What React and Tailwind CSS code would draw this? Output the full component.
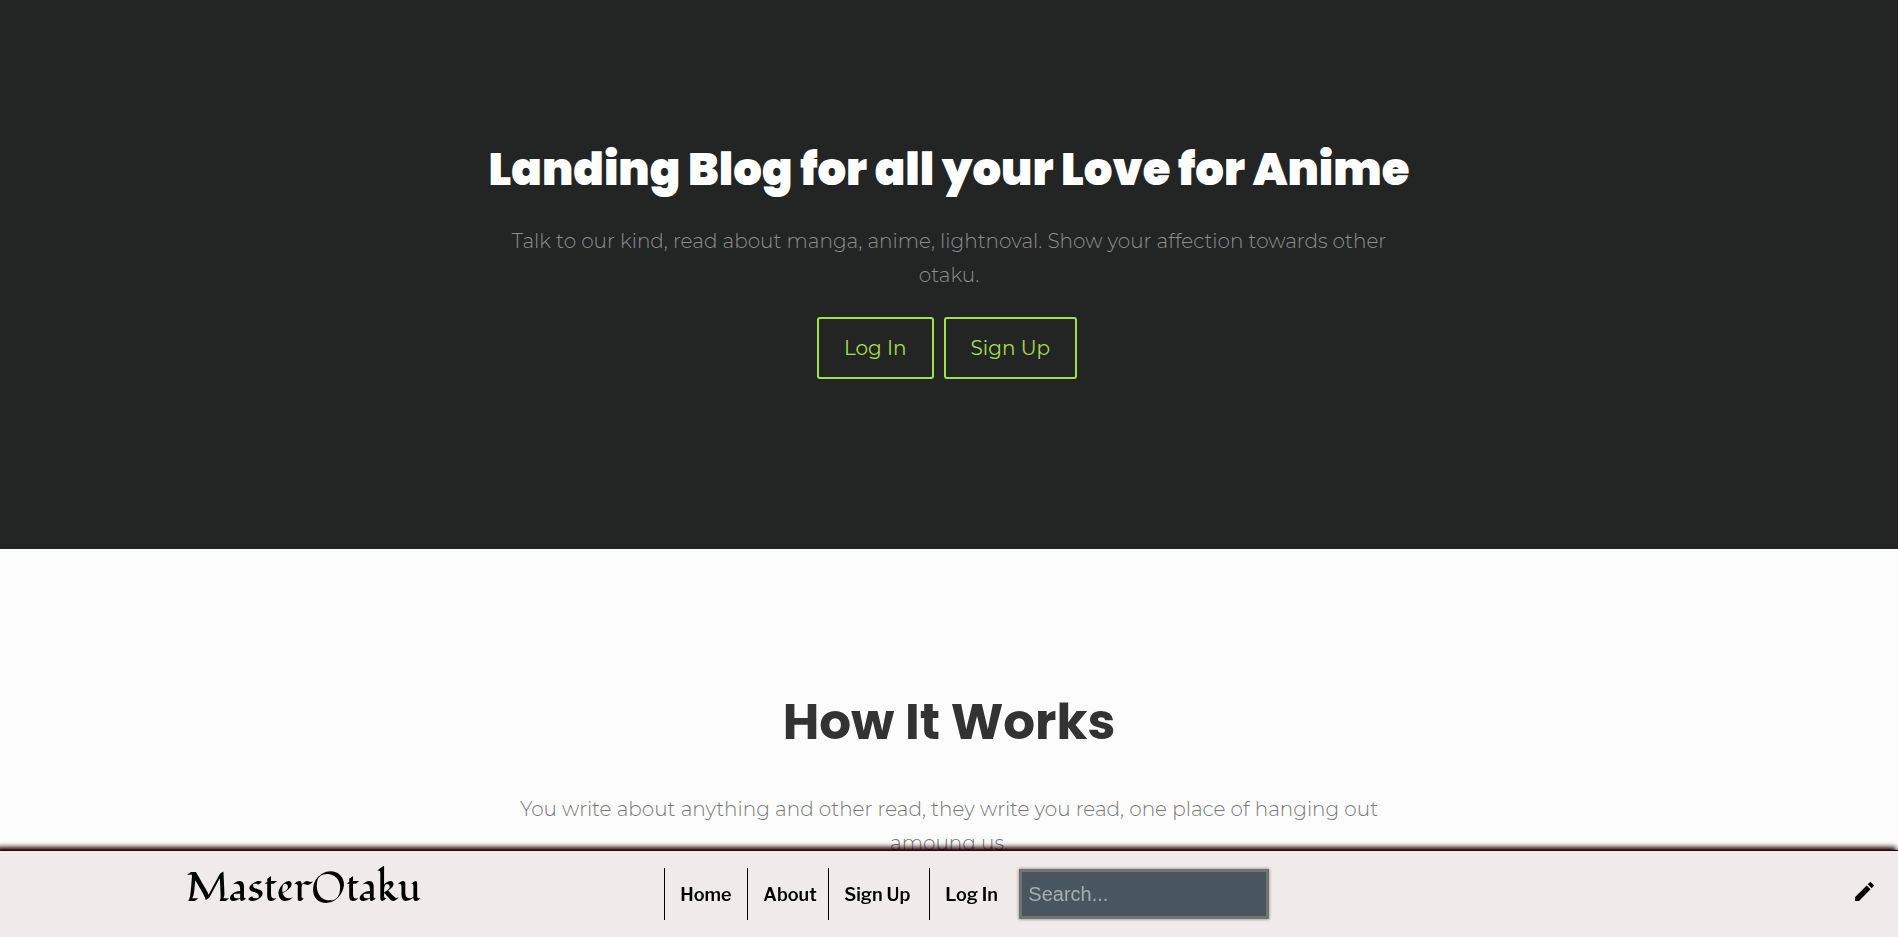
import { MdEdit } from "react-icons/md";

const links = [
  { label: "Home", href: "#home", width: "w-[83px]" },
  { label: "About", href: "#about", width: "w-[81px]" },
  { label: "Sign Up", href: "#signup", width: "w-[101px]" },
  { label: "Log In", href: "#login", width: "w-[90px]" },
];

function HeroButton({ children }) {
  return (
    <button
      type="button"
      className="h-[62px] cursor-pointer rounded-[3px] border-2 border-[#a3de4b] px-[25px] text-[20px] text-[#a3de4b]"
    >
      {children}
    </button>
  );
}

function Hero() {
  return (
    <header className="flex h-[549px] flex-col items-center bg-[#232525] px-4 pt-[136px] text-center">
      <h1 className="font-[Poppins,Inter,sans-serif] text-[45px] leading-[68px] font-black text-white">
        Landing Blog for all your Love for Anime
      </h1>
      <p className="mt-5 max-w-[900px] text-[20px] leading-[34px] font-light text-[#8f8f8f]">
        Talk to our kind, read about manga, anime, lightnoval. Show your affection towards other otaku.
      </p>
      <div className="mt-[25px] mr-1 flex gap-2.5">
        <HeroButton>Log In</HeroButton>
        <HeroButton>Sign Up</HeroButton>
      </div>
    </header>
  );
}

function HowItWorks() {
  return (
    <section className="flex flex-col items-center px-4 pt-[135px] pb-32 text-center">
      <h2 className="font-[Poppins,Inter,sans-serif] text-[50px] leading-[76px] font-bold text-[#333333]">
        How It Works
      </h2>
      <p className="mt-8 max-w-[900px] text-[20px] leading-[34px] font-light text-[#777777]">
        You write about anything and other read, they write you read, one place of hanging out amoung us.
      </p>
    </section>
  );
}

function BottomBar() {
  return (
    <nav
      aria-label="Main"
      className="fixed inset-x-0 bottom-0 grid h-[86px] grid-cols-[35%_auto_1fr] items-center bg-[#f0eaea] shadow-[0_-1px_1px_#2b0206,-3px_-3px_5px_1px_#1c0104]"
    >
      <a
        href="#home"
        className="-mt-2.5 pl-[28%] font-['Fondamento','Liberation_Serif',serif] text-[40px] leading-none text-black"
      >
        MasterOtaku
      </a>
      <div className="flex items-center">
        <ul className="flex font-['Libre_Franklin',Roboto,sans-serif] text-[18px] font-semibold text-black">
          {links.map((link) => (
            <li key={link.label} className={`${link.width} h-[52px] shrink-0 border-l border-black`}>
              <a href={link.href} className="flex h-full items-center pl-[15px] whitespace-nowrap">
                {link.label}
              </a>
            </li>
          ))}
        </ul>
        <input
          type="search"
          aria-label="Search"
          placeholder="Search..."
          className="h-[50px] w-[250px] border-3 border-[#757371] bg-[#4a565f] px-1.5 font-['Liberation_Sans',sans-serif] text-[20px] text-white shadow-[0_0_3px_#757371] placeholder:text-[#a6adb1]"
        />
      </div>
      <button type="button" aria-label="Write a post" className="mr-[21px] -mt-1.5 cursor-pointer justify-self-end">
        <MdEdit className="size-[25px] text-black" />
      </button>
    </nav>
  );
}

export default function App() {
  return (
    <div className="h-screen overflow-hidden bg-[#fcfcfc] font-[Montserrat,Inter,sans-serif]">
      <Hero />
      <HowItWorks />
      <BottomBar />
    </div>
  );
}
